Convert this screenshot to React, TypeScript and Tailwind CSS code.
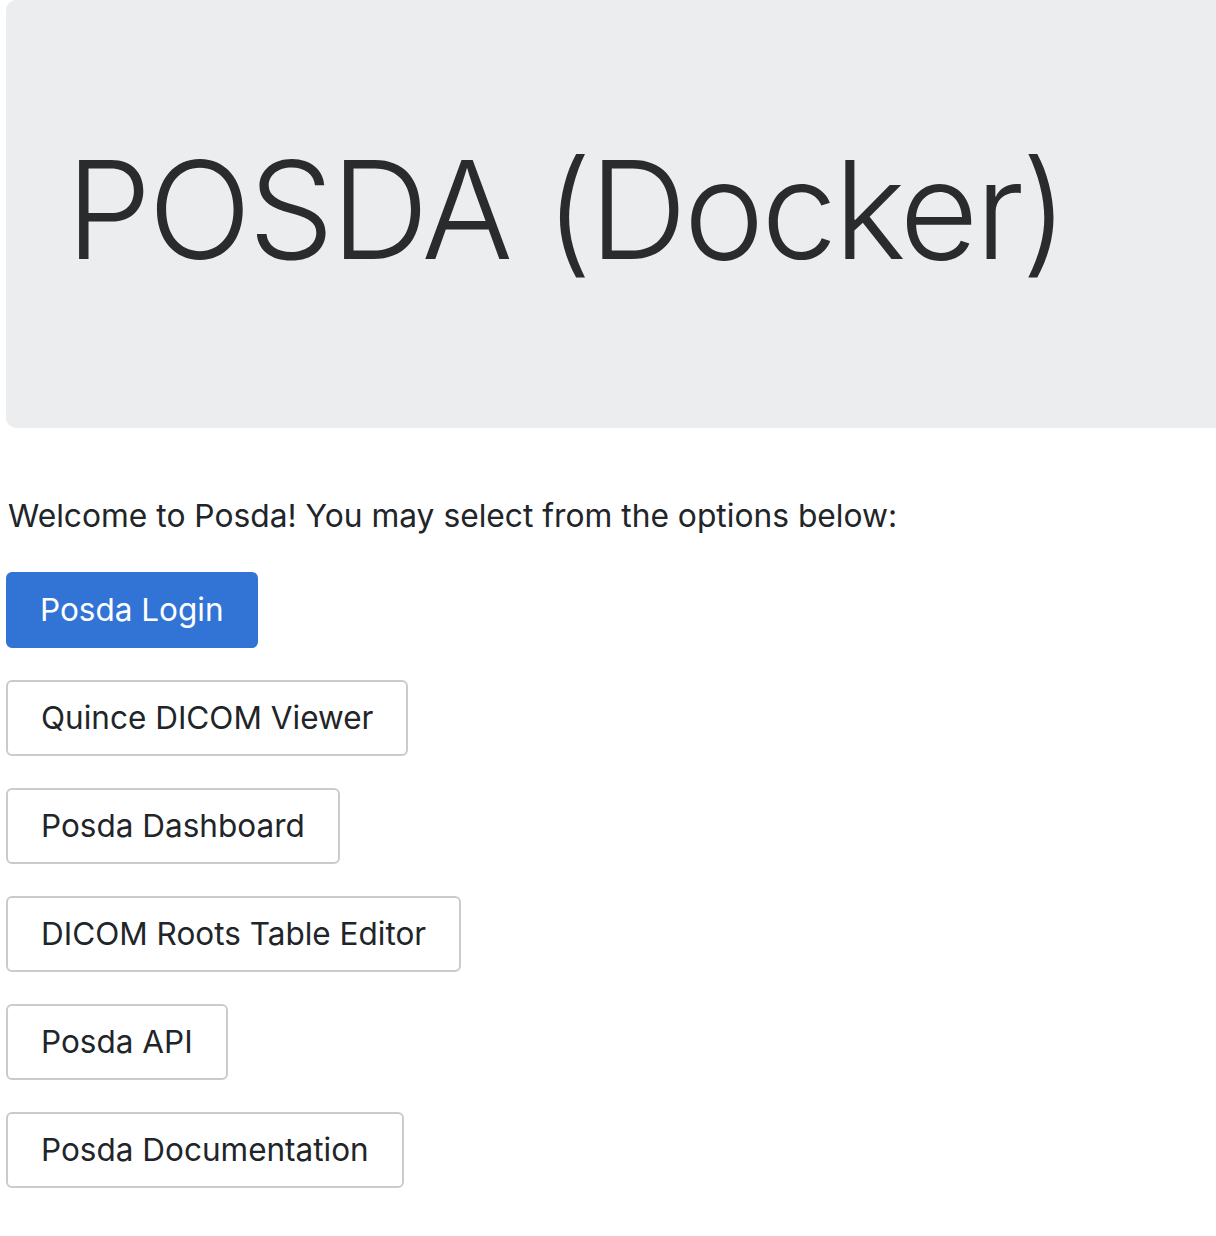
import { FC } from "react";

const links: { label: string; primary?: boolean }[] = [
  { label: "Posda Login", primary: true },
  { label: "Quince DICOM Viewer" },
  { label: "Posda Dashboard" },
  { label: "DICOM Roots Table Editor" },
  { label: "Posda API" },
  { label: "Posda Documentation" },
];

const App: FC = () => {
  return (
    <div className="min-h-screen bg-white pl-[6px] text-[#212529] font-['Inter',sans-serif]">
      <div className="h-[428px] w-[1240px] bg-[#ecedef] rounded-[10px] flex items-center pl-[60px] pb-[8px]">
        <h1 className="text-[136px] leading-none font-light text-[#2a2b2d] tracking-[-3.2px]">
          POSDA (Docker)
        </h1>
      </div>

      <p className="mt-[64px] text-[31.75px] leading-[48px] pl-[2px]">
        Welcome to Posda! You may select from the options below:
      </p>

      <div className="mt-[32px] flex flex-col items-start gap-[32px]">
        {links.map((l) => (
          <button
            key={l.label}
            className={
              l.primary
                ? "h-[76px] px-[32px] rounded-[6px] border-2 border-[#3274d6] bg-[#3274d6] text-white text-[31.5px]"
                : "h-[76px] px-[33px] rounded-[6px] border-2 border-[#cbcbcb] bg-white text-[#212529] text-[31.5px]"
            }
          >
            {l.label}
          </button>
        ))}
      </div>
    </div>
  );
};

export default App;
